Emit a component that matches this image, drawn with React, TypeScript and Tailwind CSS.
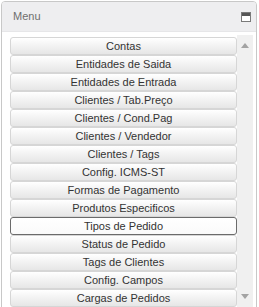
const items = [
  'Contas',
  'Entidades de Saida',
  'Entidades de Entrada',
  'Clientes / Tab.Preço',
  'Clientes / Cond.Pag',
  'Clientes / Vendedor',
  'Clientes / Tags',
  'Config. ICMS-ST',
  'Formas de Pagamento',
  'Produtos Especificos',
  'Tipos de Pedido',
  'Status de Pedido',
  'Tags de Clientes',
  'Config. Campos',
  'Cargas de Pedidos',
]

export default function App() {
  return (
    <div className="w-[259px] h-[307px] overflow-hidden bg-white" style={{ fontFamily: '"Liberation Sans", Arial, sans-serif' }}>
      <div className="ml-[1px] mt-[1px] w-[256px] h-[320px] border border-[#c8c8c8] rounded-[4px] overflow-hidden flex flex-col">
        <div className="h-[30px] shrink-0 bg-[#eeeef0] border-b border-[#e6e6e8] flex items-center justify-between pl-[11px] pr-[5px]">
          <span className="text-[11px] text-[#6e6e6e]">Menu</span>
          <div className="w-[10px] h-[10px] mt-[1px] border border-[#7a7a7a] bg-white flex flex-col">
            <div className="h-[3px] bg-[#555]" />
          </div>
        </div>
        <div className="flex pl-[8px] pt-[5px] pr-[2px]">
          <div className="w-[227px] flex flex-col">
            {items.map((label) => (
              <div
                key={label}
                className={
                  'h-[18px] flex items-center justify-center rounded-[3px] border text-[11px] text-[#333] bg-gradient-to-b from-white to-[#e6e6e6] ' +
                  (label === 'Tipos de Pedido' ? 'border-[#6b6b6b] from-[#fafafa] to-[#fafafa]' : 'border-[#d6d6d6]')
                }
              >
                {label}
              </div>
            ))}
          </div>
          <div className="w-[16px] h-[272px] mt-[-2px] bg-[#f0f0f0] flex flex-col items-center justify-between py-[8px]">
            <div className="w-0 h-0 border-l-[4px] border-r-[4px] border-b-[5px] border-l-transparent border-r-transparent border-b-[#a3a3a3]" />
            <div className="w-0 h-0 border-l-[4px] border-r-[4px] border-t-[5px] border-l-transparent border-r-transparent border-t-[#a3a3a3]" />
          </div>
        </div>
      </div>
    </div>
  )
}
